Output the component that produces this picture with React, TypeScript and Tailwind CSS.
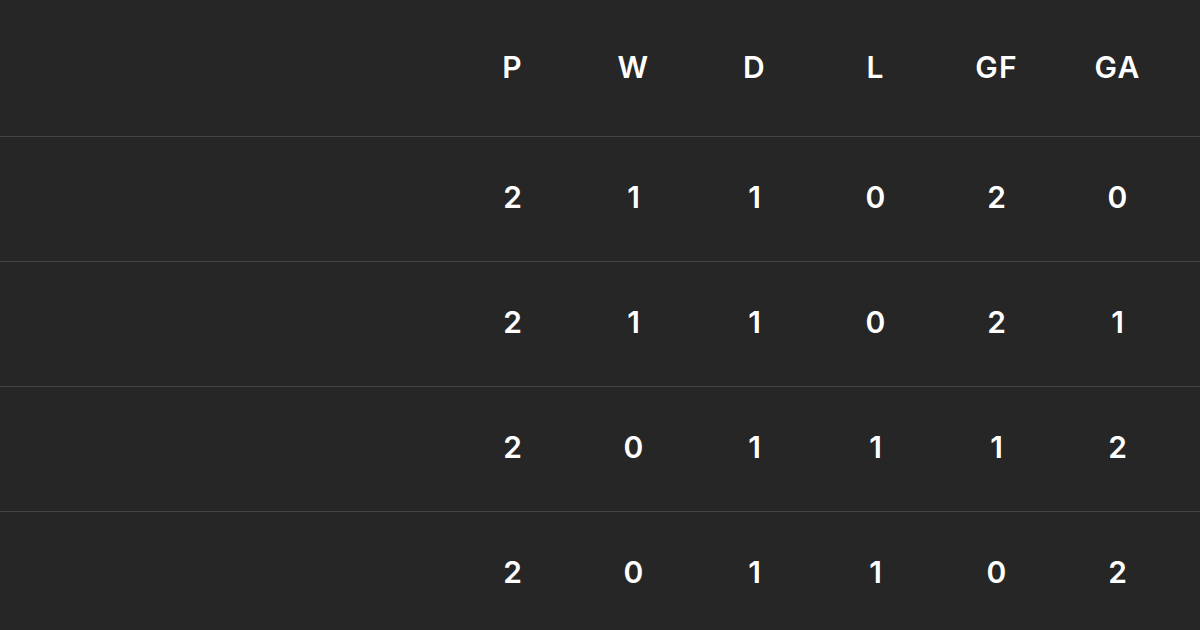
import React from "react";

const headers = ["P", "W", "D", "L", "GF", "GA"];
const rows = [
  [2, 1, 1, 0, 2, 0],
  [2, 1, 1, 0, 2, 1],
  [2, 0, 1, 1, 1, 2],
  [2, 0, 1, 1, 0, 2],
];

export default function App() {
  return (
    <div
      className="w-[1200px] h-[630px] overflow-hidden bg-[#262626] text-white"
      style={{ fontFamily: "Inter, 'Noto Sans', sans-serif" }}
    >
      <div className="flex h-[137px] items-center border-b border-[#444444] pr-[22px] pb-[3px]">
        <div className="w-[452px]" />
        {headers.map((h) => (
          <div key={h} className="w-[121px] text-center text-[30px] font-semibold leading-none tracking-[0.04em]">
            {h}
          </div>
        ))}
      </div>
      {rows.map((r, i) => (
        <div key={i} className="flex h-[125px] items-center border-b border-[#444444] pr-[22px] pb-[4px]">
          <div className="w-[452px]" />
          {r.map((v, j) => (
            <div key={j} className="w-[121px] text-center text-[30px] font-semibold leading-none">
              {v}
            </div>
          ))}
        </div>
      ))}
    </div>
  );
}
